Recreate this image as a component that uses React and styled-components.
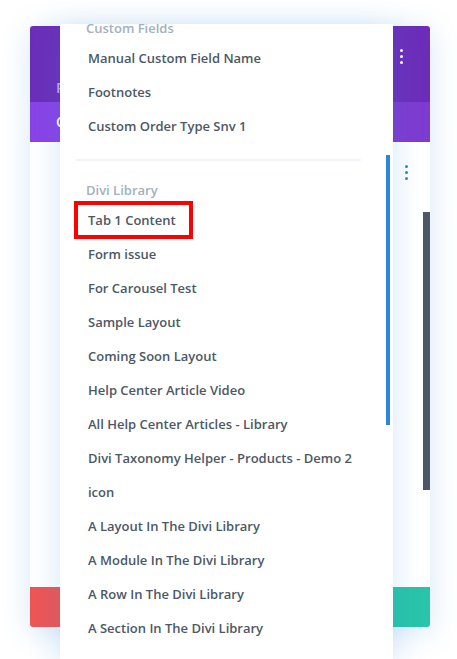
import React, { useLayoutEffect, useRef } from "react";
import styled, { createGlobalStyle } from "styled-components";

const Global = createGlobalStyle`
  html, body { margin: 0; padding: 0; background: #fff; }
  body { font-family: "Open Sans", "Noto Sans", sans-serif; overflow: hidden; }
  * { box-sizing: border-box; }
`;

const Page = styled.div`
  width: 457px;
  height: 659px;
  padding: 26px 27px 0 30px;
  overflow: hidden;
`;

const Modal = styled.div`
  position: relative;
  width: 400px;
  display: flex;
  flex-direction: column;
  border-radius: 3px;
  background: #fff;
  box-shadow: 0 5px 30px rgba(43, 135, 218, 0.2);
`;

const Header = styled.div`
  height: 76px;
  background: #6c2eb9;
  border-radius: 3px 3px 0 0;
  display: flex;
  align-items: flex-start;
  justify-content: space-between;
  padding: 20px 27px 0 26px;
`;

const HeaderText = styled.div`
  display: flex;
  flex-direction: column;
  gap: 12px;
  padding-left: 40px;
`;

const Title = styled.div`
  font-size: 16px;
  font-weight: 600;
  color: #fff;
  line-height: 20px;
`;

const Preset = styled.div`
  margin-left: -40px;
  font-size: 14px;
  font-weight: 600;
  color: rgba(255, 255, 255, 0.6);
  line-height: 20px;
`;

const Dots = styled.span`
  display: flex;
  flex-direction: column;
  gap: 3px;
  padding-top: ${(p) => p.$top || 0}px;
  & > i {
    width: 3px;
    height: 3px;
    border-radius: 50%;
    background: ${(p) => p.$color};
  }
`;

const TabBar = styled.div`
  height: 40px;
  background: #7e3bd0;
  display: flex;
`;

const Tab = styled.div`
  padding: 0 22px 0 26px;
  font-size: 14px;
  font-weight: 600;
  line-height: 40px;
  color: ${(p) => (p.$active ? "#fff" : "rgba(255,255,255,0.6)")};
  background: ${(p) => (p.$active ? "#8a43e6" : "transparent")};
`;

const Body = styled.div`
  height: 445px;
  display: flex;
`;

const BodyMain = styled.div`
  flex: 1;
  display: flex;
  justify-content: flex-end;
  padding: 23px 15px 0 0;
`;

const Track = styled.div`
  width: 7px;
  padding-top: 70px;
`;

const Thumb = styled.div`
  width: ${(p) => p.$w}px;
  height: ${(p) => p.$h}px;
  background: ${(p) => p.$color};
`;

const Footer = styled.div`
  height: 40px;
  display: flex;
  border-radius: 0 0 3px 3px;
  overflow: hidden;
`;

const FootButton = styled.div`
  flex: 1;
  background: ${(p) => p.$color};
`;

const Panel = styled.div`
  position: absolute;
  left: 30px;
  top: -2px;
  width: 333px;
  height: 640px;
  background: #fff;
  display: flex;
  box-shadow: 0 5px 30px rgba(43, 135, 218, 0.2);
`;

const List = styled.div`
  position: relative;
  flex: 1;
  overflow-y: scroll;
  scrollbar-width: none;
  padding-bottom: 60px;
  &::-webkit-scrollbar { display: none; }
`;

const PanelTrack = styled.div`
  width: 4px;
  margin-right: 3px;
  padding-top: 131px;
`;

const Heading = styled.div`
  height: 26px;
  line-height: 26px;
  padding-left: 26px;
  font-size: 13px;
  font-weight: 600;
  color: #a2b0c1;
  white-space: nowrap;
`;

const Item = styled.div`
  height: 34px;
  line-height: 34px;
  padding-left: 28px;
  font-size: 13px;
  font-weight: 600;
  color: #4c5866;
  white-space: nowrap;
`;

const Label = styled.span`
  display: inline-block;
  line-height: 18px;
  ${(p) =>
    p.$marked &&
    `
    padding: 6px 13px 6px 10px;
    margin: -6px -13px -6px -10px;
    outline: 4px solid #ff0000;
  `}
`;

const Separator = styled.div`
  height: 2px;
  margin: 16px 25px 16px 16px;
  background: #f1f4f8;
`;

const groups = [
  { title: "Pages", items: ["Home", "About", "Contact"] },
  {
    title: "Custom Fields",
    anchor: true,
    items: ["Manual Custom Field Name", "Footnotes", "Custom Order Type Snv 1"],
  },
  {
    title: "Divi Library",
    items: [
      "Tab 1 Content",
      "Form issue",
      "For Carousel Test",
      "Sample Layout",
      "Coming Soon Layout",
      "Help Center Article Video",
      "All Help Center Articles - Library",
      "Divi Taxonomy Helper - Products - Demo 2",
      "icon",
      "A Layout In The Divi Library",
      "A Module In The Divi Library",
      "A Row In The Divi Library",
      "A Section In The Divi Library",
    ],
  },
];

function ThreeDots({ color, top }) {
  return (
    <Dots $color={color} $top={top}>
      <i />
      <i />
      <i />
    </Dots>
  );
}

export default function App() {
  const listRef = useRef(null);
  const anchorRef = useRef(null);

  useLayoutEffect(() => {
    if (listRef.current && anchorRef.current) {
      listRef.current.scrollTop = anchorRef.current.offsetTop + 9;
    }
  }, []);

  return (
    <>
      <Global />
      <Page>
        <Modal>
          <Header>
            <HeaderText>
              <Title>Text Settings</Title>
              <Preset>Preset: Default</Preset>
            </HeaderText>
            <ThreeDots color="#fff" top={3} />
          </Header>
          <TabBar>
            <Tab $active>Content</Tab>
            <Tab>Design</Tab>
            <Tab>Advanced</Tab>
          </TabBar>
          <Body>
            <BodyMain>
              <ThreeDots color="#2b87da" />
            </BodyMain>
            <Track>
              <Thumb $w={7} $h={278} $color="#4c5866" />
            </Track>
          </Body>
          <Footer>
            <FootButton $color="#ef5555" />
            <FootButton $color="#7e3bd0" />
            <FootButton $color="#2b87da" />
            <FootButton $color="#29c4a9" />
          </Footer>
          <Panel>
            <List ref={listRef}>
              {groups.map((g, gi) => (
                <div key={g.title}>
                  {gi > 0 && <Separator />}
                  <Heading ref={g.anchor ? anchorRef : undefined}>{g.title}</Heading>
                  {g.items.map((it) => (
                    <Item key={it}>
                      <Label $marked={it === "Tab 1 Content"}>{it}</Label>
                    </Item>
                  ))}
                </div>
              ))}
            </List>
            <PanelTrack>
              <Thumb $w={4} $h={270} $color="#2b87da" />
            </PanelTrack>
          </Panel>
        </Modal>
      </Page>
    </>
  );
}
